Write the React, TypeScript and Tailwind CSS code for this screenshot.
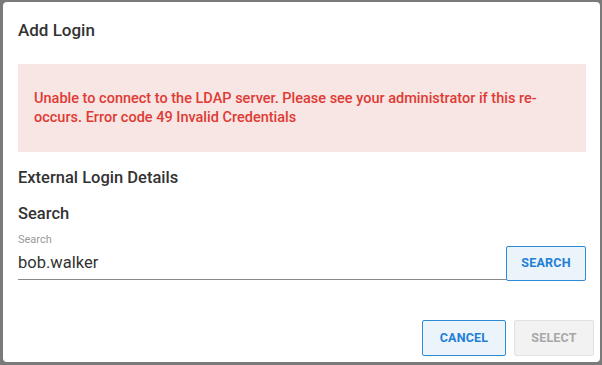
export default function App() {
  return (
    <div
      className="w-[602px] h-[365px] bg-[#7a7a7a] pt-[2px] pl-[3px] overflow-hidden"
      style={{ fontFamily: "Roboto, 'Liberation Sans', sans-serif" }}
    >
      <div className="w-[597px] h-[360px] bg-white rounded-[4px] flex flex-col">
        <div className="px-[15px] pt-[18px]">
          <h2 className="text-[17px] leading-[20px] font-medium text-[#333]">Add Login</h2>
          <div className="mt-[24px] w-[568px] h-[88px] bg-[#f7e6e4] px-[16px] flex items-center">
            <p className="text-[14.5px] leading-[19px] font-medium text-[#df3b34]">
              Unable to connect to the LDAP server. Please see your administrator if this re-occurs. Error code 49 Invalid Credentials
            </p>
          </div>
          <h3 className="mt-[16px] text-[16.5px] leading-[20px] font-medium text-[#333]">External Login Details</h3>
          <h4 className="mt-[16px] text-[16.5px] leading-[20px] font-medium text-[#333]">Search</h4>
          <div className="flex items-end w-[568px]">
            <div className="flex-1 flex flex-col border-b border-[#8a8a8a] pt-[9px] pb-[6px]">
              <label className="text-[11px] leading-[14px] text-[#9a9a9a]">Search</label>
              <div className="mt-[6px] text-[16.5px] leading-[20px] text-[#333]">bob.walker</div>
            </div>
            <button className="w-[80px] h-[35px] mb-[-1px] border border-[#2f8ad8] bg-[#ebf3fb] rounded-[2px] text-[12.5px] font-bold text-[#1f7fd6] tracking-[0.2px]">
              SEARCH
            </button>
          </div>
        </div>
        <div className="flex-1" />
        <div className="flex justify-end gap-[8px] pr-[6px] pb-[6px]">
          <button className="w-[84px] h-[36px] border border-[#2f8ad8] bg-[#ebf3fb] rounded-[2px] text-[12.5px] font-bold text-[#1f7fd6] tracking-[0.2px]">
            CANCEL
          </button>
          <button className="w-[80px] h-[36px] border border-[#e2e2e2] bg-[#f2f2f2] rounded-[2px] text-[12.5px] font-bold text-[#a8a8a8] tracking-[0.2px]">
            SELECT
          </button>
        </div>
      </div>
    </div>
  );
}
